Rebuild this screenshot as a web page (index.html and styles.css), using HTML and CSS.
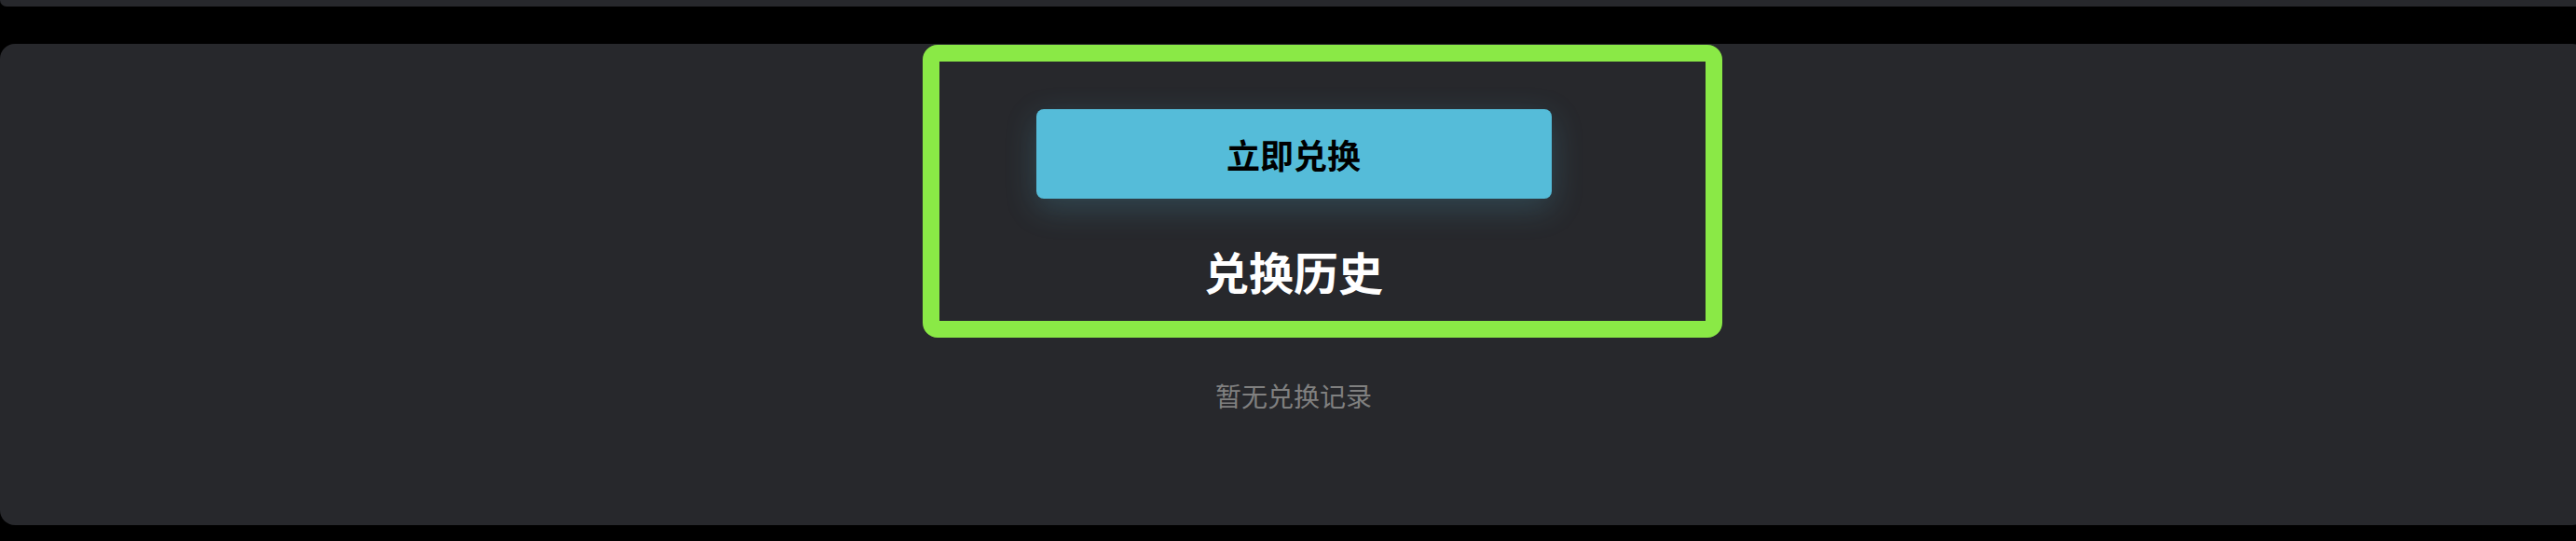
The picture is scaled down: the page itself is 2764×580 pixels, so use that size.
FILE: index.html
```html
<!DOCTYPE html>
<html lang="zh-CN">
<head>
    <meta charset="UTF-8">
    <meta name="viewport" content="width=device-width, initial-scale=1.0">
    <title>兑换</title>
    <link rel="stylesheet" href="styles.css">
</head>
<body>

    <div class="top-panel"></div>

    <div class="card">
        <button class="redeem-btn">立即兑换</button>
        <h2 class="history-title">兑换历史</h2>
        <p class="empty-text">暂无兑换记录</p>
    </div>

    <!-- highlight frame drawn over the redeem section -->
    <div class="highlight"></div>

</body>
</html>
```

FILE: styles.css
```css
body {
    margin: 0;
    background-color: #000;
    font-family: "Noto Sans CJK SC", "Noto Sans", sans-serif;
    overflow: hidden;
    height: 580px;
    position: relative;
}
.top-panel {
    width: calc(100% + 12px);
    height: 7px;
    background-color: #27282c;
    border-radius: 0 0 16px 16px;
}
.card {
    width: calc(100% + 12px);
    height: 516px;
    margin-top: 40px;
    padding-top: 70px;
    box-sizing: border-box;
    background-color: #27282c;
    border-radius: 16px;
    display: flex;
    flex-direction: column;
    align-items: center;
}
.redeem-btn {
    width: 553px;
    height: 96px;
    border: none;
    border-radius: 8px;
    background-color: #55bcd9;
    color: #000;
    font-family: inherit;
    font-size: 36px;
    font-weight: 700;
    line-height: 1;
    cursor: pointer;
    box-shadow: 0 10px 34px rgba(85, 188, 217, 0.22);
}
.history-title {
    margin: 53px 0 0;
    font-size: 48px;
    font-weight: 700;
    line-height: 1;
    color: #fff;
}
.empty-text {
    margin: 96px 0 0;
    font-size: 28px;
    line-height: 1;
    color: #808080;
}
.highlight {
    position: absolute;
    left: 990px;
    top: 48px;
    width: 858px;
    height: 314px;
    box-sizing: border-box;
    border: 18px solid #8ae946;
    border-radius: 16px;
}
```
